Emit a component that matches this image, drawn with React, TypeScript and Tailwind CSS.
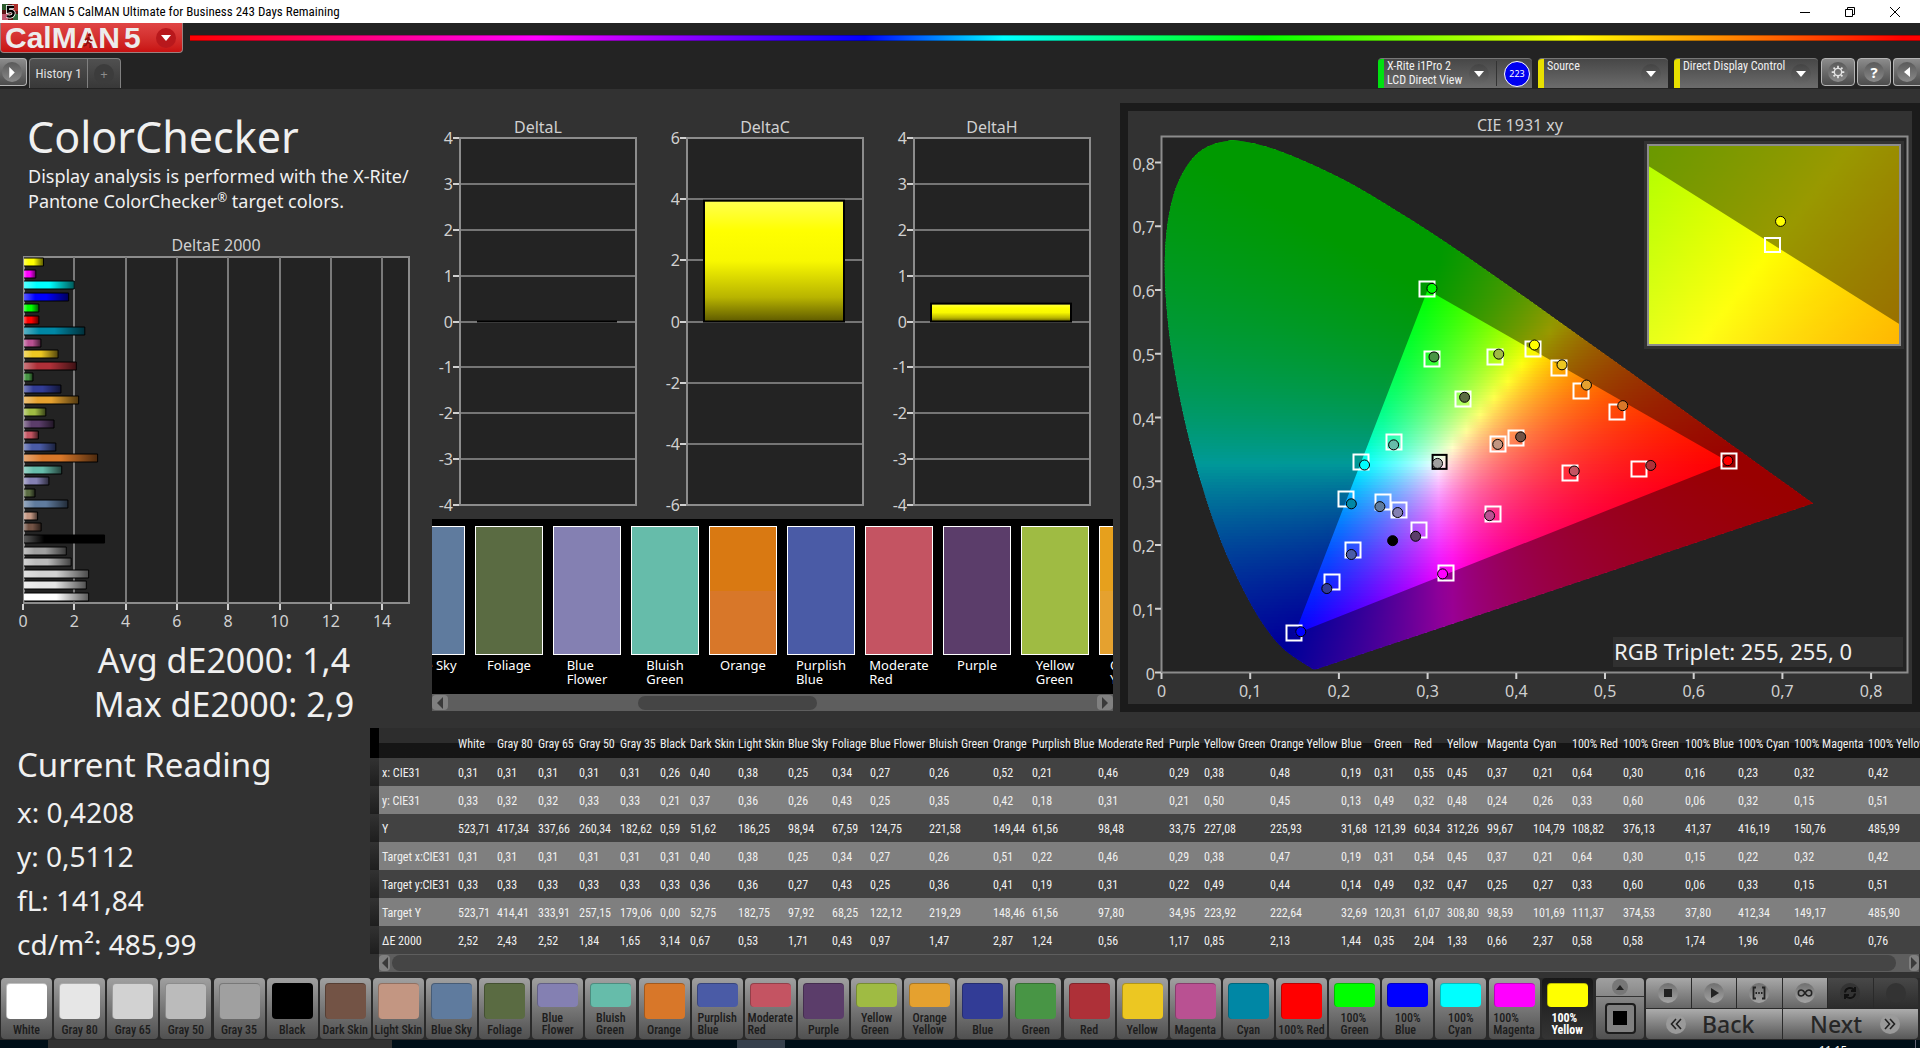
import type { ReactNode } from "react";

type Patch = {
  name: string;
  color: string;
  width: number;
  values: string[];
};

const rowLabels = ["x: CIE31", "y: CIE31", "Y", "Target x:CIE31", "Target y:CIE31", "Target Y", "ΔE 2000"];

const patches: Patch[] = [
  { name: "White", color: "#ffffff", width: 39, values: ["0,31", "0,33", "523,71", "0,31", "0,33", "523,71", "2,52"] },
  { name: "Gray 80", color: "#e6e6e6", width: 41, values: ["0,31", "0,32", "417,34", "0,31", "0,33", "414,41", "2,43"] },
  { name: "Gray 65", color: "#d2d2d2", width: 41, values: ["0,31", "0,32", "337,66", "0,31", "0,33", "333,91", "2,52"] },
  { name: "Gray 50", color: "#bbbbbb", width: 41, values: ["0,31", "0,33", "260,34", "0,31", "0,33", "257,15", "1,84"] },
  { name: "Gray 35", color: "#a0a0a0", width: 40, values: ["0,31", "0,33", "182,62", "0,31", "0,33", "179,06", "1,65"] },
  { name: "Black", color: "#000000", width: 30, values: ["0,26", "0,21", "0,59", "0,31", "0,33", "0,00", "3,14"] },
  { name: "Dark Skin", color: "#735345", width: 48, values: ["0,40", "0,37", "51,62", "0,40", "0,36", "52,75", "0,67"] },
  { name: "Light Skin", color: "#c39682", width: 50, values: ["0,38", "0,36", "186,25", "0,38", "0,36", "182,75", "0,53"] },
  { name: "Blue Sky", color: "#5f7b9e", width: 44, values: ["0,25", "0,26", "98,94", "0,25", "0,27", "97,92", "1,71"] },
  { name: "Foliage", color: "#5a6b42", width: 38, values: ["0,34", "0,43", "67,59", "0,34", "0,43", "68,25", "0,43"] },
  { name: "Blue Flower", color: "#8480b2", width: 59, values: ["0,27", "0,25", "124,75", "0,27", "0,25", "122,12", "0,97"] },
  { name: "Bluish Green", color: "#66bcaa", width: 64, values: ["0,26", "0,35", "221,58", "0,26", "0,36", "219,29", "1,47"] },
  { name: "Orange", color: "#d87729", width: 39, values: ["0,52", "0,42", "149,44", "0,51", "0,41", "148,46", "2,87"] },
  { name: "Purplish Blue", color: "#4a5ba6", width: 66, values: ["0,21", "0,18", "61,56", "0,22", "0,19", "61,56", "1,24"] },
  { name: "Moderate Red", color: "#c45462", width: 71, values: ["0,46", "0,31", "98,48", "0,46", "0,31", "97,80", "0,56"] },
  { name: "Purple", color: "#5b3d6a", width: 35, values: ["0,29", "0,21", "33,75", "0,29", "0,22", "34,95", "1,17"] },
  { name: "Yellow Green", color: "#9fbb43", width: 66, values: ["0,38", "0,50", "227,08", "0,38", "0,49", "223,92", "0,85"] },
  { name: "Orange Yellow", color: "#e5a12f", width: 71, values: ["0,48", "0,45", "225,93", "0,47", "0,44", "222,64", "2,13"] },
  { name: "Blue", color: "#323c96", width: 33, values: ["0,19", "0,13", "31,68", "0,19", "0,14", "32,69", "1,44"] },
  { name: "Green", color: "#489545", width: 40, values: ["0,31", "0,49", "121,39", "0,31", "0,49", "120,31", "0,35"] },
  { name: "Red", color: "#ae3038", width: 33, values: ["0,55", "0,32", "60,34", "0,54", "0,32", "61,07", "2,04"] },
  { name: "Yellow", color: "#ecc722", width: 40, values: ["0,45", "0,48", "312,26", "0,45", "0,47", "308,80", "1,33"] },
  { name: "Magenta", color: "#b95192", width: 46, values: ["0,37", "0,24", "99,67", "0,37", "0,25", "98,59", "0,66"] },
  { name: "Cyan", color: "#0087a5", width: 39, values: ["0,21", "0,26", "104,79", "0,21", "0,27", "101,69", "2,37"] },
  { name: "100% Red", color: "#ff0000", width: 51, values: ["0,64", "0,33", "108,82", "0,64", "0,33", "111,37", "0,58"] },
  { name: "100% Green", color: "#00ff00", width: 62, values: ["0,30", "0,60", "376,13", "0,30", "0,60", "374,53", "0,58"] },
  { name: "100% Blue", color: "#0000ff", width: 53, values: ["0,16", "0,06", "41,37", "0,15", "0,06", "37,80", "1,74"] },
  { name: "100% Cyan", color: "#00ffff", width: 56, values: ["0,23", "0,32", "416,19", "0,22", "0,33", "412,34", "1,96"] },
  { name: "100% Magenta", color: "#ff00ff", width: 74, values: ["0,32", "0,15", "150,76", "0,32", "0,15", "149,17", "0,46"] },
  { name: "100% Yellow", color: "#ffff00", width: 66, values: ["0,42", "0,51", "485,99", "0,42", "0,51", "485,90", "0,76"] },
];

// chromaticity of each target box: x, y
const targets: [number, number][] = [
  [0.299, 0.602], [0.305, 0.4925], [0.3756, 0.4944], [0.4193, 0.5075], [0.4481, 0.477],
  [0.4734, 0.441], [0.5131, 0.4087], [0.6396, 0.3323], [0.5378, 0.3186], [0.4607, 0.313],
  [0.3998, 0.3671], [0.3791, 0.3578], [0.3399, 0.4298], [0.2623, 0.3621], [0.2249, 0.3304],
  [0.2076, 0.272], [0.2496, 0.2677], [0.2675, 0.2553], [0.2905, 0.223], [0.2163, 0.1925],
  [0.1921, 0.1416], [0.149, 0.0621], [0.3204, 0.1553], [0.3733, 0.2484],
];

// measured readings: x, y, fill
const readings: [number, number, string][] = [
  [0.3049, 0.6025, "#00ff00"], [0.3072, 0.495, "#489545"], [0.3802, 0.4994, "#9fbb43"],
  [0.4205, 0.5137, "#ffff00"], [0.4515, 0.4826, "#ecc722"], [0.4791, 0.4509, "#e5a12f"],
  [0.52, 0.4186, "#d87729"], [0.6385, 0.3323, "#ff0000"], [0.5516, 0.3248, "#ae3038"],
  [0.4653, 0.3161, "#c45462"], [0.4049, 0.3696, "#735345"], [0.3791, 0.3578, "#c39682"],
  [0.3417, 0.4317, "#5a6b42"], [0.2617, 0.3571, "#66bcaa"], [0.2289, 0.3255, "#00ffff"],
  [0.214, 0.2646, "#0087a5"], [0.2462, 0.2602, "#5f7b9e"], [0.2663, 0.2509, "#8480b2"],
  [0.2865, 0.2137, "#5b3d6a"], [0.2606, 0.2068, "#000000"], [0.214, 0.1851, "#4a5ba6"],
  [0.1864, 0.1317, "#323c96"], [0.157, 0.064, "#0000ff"], [0.3169, 0.1547, "#ff00ff"],
  [0.3699, 0.246, "#b95192"], [0.3112, 0.328, "#a0a0a0"],
];

const locus: [number, number][] = [
  [0.1741, 0.005], [0.1714, 0.0051], [0.1689, 0.0069], [0.1644, 0.0109], [0.1566, 0.0177],
  [0.144, 0.0297], [0.1355, 0.0399], [0.1241, 0.0578], [0.1096, 0.0868], [0.0913, 0.1327],
  [0.0687, 0.2007], [0.0454, 0.295], [0.0235, 0.4127], [0.0082, 0.5384], [0.0039, 0.6548],
  [0.0139, 0.7502], [0.0389, 0.812], [0.0743, 0.8338], [0.1142, 0.8262], [0.1547, 0.8059],
  [0.1929, 0.7816], [0.2296, 0.7543], [0.3016, 0.6923], [0.3731, 0.6245], [0.4441, 0.5547],
  [0.5125, 0.4866], [0.5752, 0.4242], [0.627, 0.3725], [0.6915, 0.3083], [0.7347, 0.2653],
];

const gamut: [number, number][] = [[0.64, 0.33], [0.3, 0.6], [0.15, 0.06]];

// "Blue Flower" takes two lines on a narrow button, "Gray 80" does not
const oneLine = /^(Gray \d+|Dark Skin|Light Skin|Blue Sky|100% Red)$/;

function labelLines(name: string) {
  return oneLine.test(name) ? [name] : name.split(" ");
}

function chromaColor(x: number, y: number) {
  const X = x / y;
  const Z = (1 - x - y) / y;
  const rgb = [
    3.2406 * X - 1.5372 - 0.4986 * Z,
    -0.9689 * X + 1.8758 + 0.0415 * Z,
    0.0557 * X - 0.204 + 1.057 * Z,
  ].map((c) => Math.max(0, c));
  const max = Math.max(...rgb);
  return `rgb(${rgb.map((c) => Math.round((c / max) * 255)).join(",")})`;
}

type FieldProps = {
  id: string;
  x0: number;
  x1: number;
  y0: number;
  y1: number;
  left: number;
  top: number;
  width: number;
  height: number;
};

// Thin horizontal bands, each one a gradient sampled along x
function ColorField({ id, x0, x1, y0, y1, left, top, width, height }: FieldProps) {
  const band = 3;
  const rows = Math.ceil(height / band);
  const stops = 48;
  return (
    <g>
      {Array.from({ length: rows }, (_, r) => {
        const y = y1 - ((y1 - y0) * (r + 0.5)) / rows;
        return (
          <g key={r}>
            <linearGradient id={`${id}${r}`}>
              {Array.from({ length: stops + 1 }, (_, s) => (
                <stop
                  key={s}
                  offset={s / stops}
                  stopColor={chromaColor(x0 + ((x1 - x0) * s) / stops, Math.max(y, 0.002))}
                />
              ))}
            </linearGradient>
            <rect x={left} y={top + r * band} width={width} height={band + 1} fill={`url(#${id}${r})`} />
          </g>
        );
      })}
    </g>
  );
}

const px = (x: number) => 41.5 + x * 887;
const py = (y: number) => 569.5 - y * 637.5;

function locusPath() {
  const p = locus.map(([x, y]) => [px(x), py(y)]);
  let d = `M${p[0][0]} ${p[0][1]}`;
  for (let i = 0; i < p.length - 1; i++) {
    const a = p[Math.max(i - 1, 0)];
    const b = p[i];
    const c = p[i + 1];
    const e = p[Math.min(i + 2, p.length - 1)];
    d += `C${b[0] + (c[0] - a[0]) / 6} ${b[1] + (c[1] - a[1]) / 6} ${c[0] - (e[0] - b[0]) / 6} ${c[1] - (e[1] - b[1]) / 6} ${c[0]} ${c[1]}`;
  }
  return d + "Z";
}

function CieChart() {
  const shape = locusPath();
  const triangle = "M" + gamut.map(([x, y]) => `${px(x)} ${py(y)}`).join("L") + "Z";

  // zoomed view, centred on the yellow target
  const box = { x: 528, y: 42, w: 252, h: 200 };
  const centre = [0.4193, 0.5053];
  const range = 0.05;
  const zx = (x: number) => box.x + box.w * ((x - centre[0]) / range + 0.5);
  const zy = (y: number) => box.y + box.h * (0.5 - (y - centre[1]) / range);
  const zoomTriangle = "M" + gamut.map(([x, y]) => `${zx(x)} ${zy(y)}`).join("L") + "Z";

  return (
    <svg viewBox="8 8 784 593" className="block w-full" role="img" aria-label="CIE 1931 xy">
      <defs>
        <clipPath id="locus">
          <path d={shape} />
        </clipPath>
        <clipPath id="zoomBox">
          <rect x={box.x} y={box.y} width={box.w} height={box.h} />
        </clipPath>
      </defs>
      <text x="400" y="28" textAnchor="middle" fontSize="16" fill="#d0d0d0">CIE 1931 xy</text>
      <rect x="41.5" y="33.5" width="746" height="536" fill="#232323" stroke="#8c8c8c" strokeWidth="2" />
      {[0, 1, 2, 3, 4, 5, 6, 7, 8].map((n) => (
        <g key={n} fontSize="16" fill="#d0d0d0" stroke="none">
          <path d={`M${px(n / 10)} 570v6M35 ${py(n / 10)}h6`} stroke="#d0d0d0" strokeWidth="2" />
          <text x={px(n / 10)} y="594" textAnchor="middle">{n ? `0,${n}` : "0"}</text>
          <text x="35" y={py(n / 10) + 7} textAnchor="end">{n ? `0,${n}` : "0"}</text>
        </g>
      ))}
      <g clipPath="url(#locus)">
        <ColorField id="f" x0={0} x1={0.75} y0={0} y1={0.84} left={41.5} top={34} width={665.25} height={535.5} />
        <path d={`M0 0H792V601H0Z${triangle}`} fillRule="evenodd" fill="#000" fillOpacity="0.4" />
      </g>
      {targets.map(([x, y], i) => (
        <rect key={i} x={Math.round(px(x)) - 7.5} y={Math.round(py(y)) - 7.5} width="15" height="15" fill="none" stroke="#fff" strokeWidth="2" />
      ))}
      <rect x={px(0.3135) - 7} y={py(0.3304) - 7} width="14" height="14" fill="none" stroke="#000" strokeWidth="2" />
      {readings.map(([x, y, fill], i) => (
        <circle key={i} cx={px(x)} cy={py(y)} r="5" fill={fill} stroke="#000" strokeWidth="1" />
      ))}

      <rect x="524" y="38" width="260" height="208" fill="#323232" />
      <g clipPath="url(#zoomBox)">
        <ColorField
          id="z"
          x0={centre[0] - range / 2}
          x1={centre[0] + range / 2}
          y0={centre[1] - range / 2}
          y1={centre[1] + range / 2}
          left={box.x}
          top={box.y}
          width={box.w}
          height={box.h}
        />
        <path d={`M-9000 -9000H9000V9000H-9000Z${zoomTriangle}`} fillRule="evenodd" fill="#000" fillOpacity="0.4" />
      </g>
      <rect x={box.x} y={box.y} width={box.w} height={box.h} fill="none" stroke="#8c8c8c" strokeWidth="2" />
      <rect x={zx(centre[0]) - 9} y={zy(centre[1]) - 7} width="15" height="14" fill="none" stroke="#fff" strokeWidth="2" />
      <circle cx={zx(0.4208) - 1} cy={zy(0.5112)} r="5" fill="#ff0" stroke="#000" />

      <rect x="493" y="534" width="290" height="30" fill="#303030" />
      <text x="494" y="557" fontSize="22" fill="#f0f0f0">RGB Triplet: 255, 255, 0</text>
    </svg>
  );
}

function DeltaEChart() {
  const bars = [...patches].reverse();
  const unit = 25.65;
  return (
    <svg viewBox="0 0 424 408" className="block w-[424px]" role="img" aria-label="DeltaE 2000">
      <defs>
        <linearGradient id="shade">
          <stop offset="0" stopColor="#fff" stopOpacity="0.35" />
          <stop offset="0.25" stopColor="#fff" stopOpacity="0" />
          <stop offset="0.5" stopColor="#000" stopOpacity="0" />
          <stop offset="1" stopColor="#000" stopOpacity="0.65" />
        </linearGradient>
      </defs>
      <text x="216" y="21" textAnchor="middle" fontSize="16" fill="#d0d0d0">DeltaE 2000</text>
      <rect x="24" y="27" width="385" height="346" fill="#232323" stroke="#8c8c8c" strokeWidth="2" />
      {[0, 2, 4, 6, 8, 10, 12, 14].map((n) => (
        <g key={n}>
          {n > 0 && <path d={`M${23 + Math.round(n * unit)} 27v346`} stroke="#7a7a7a" strokeWidth="2" />}
          <path d={`M${23 + Math.round(n * unit)} 374v6`} stroke="#d0d0d0" strokeWidth="2" />
          <text x={23 + n * unit} y="397" textAnchor="middle" fontSize="16" fill="#d0d0d0">{n}</text>
        </g>
      ))}
      {bars.map((p, i) => {
        const w = parseFloat(p.values[6].replace(",", ".")) * unit;
        const y = 28 + Math.round(i * 11.54);
        return (
          <g key={p.name}>
            <rect x="24" y={y} width={w} height="8" fill={p.color} />
            <rect x="24" y={y} width={w} height="8" fill="url(#shade)" />
            <path d={`M24 ${y}h${w}v8h${-w}`} fill="none" stroke="#000" />
          </g>
        );
      })}
    </svg>
  );
}

function DeltaChart({ title, max, step, value }: { title: string; max: number; step: number; value: number }) {
  const ticks: number[] = [];
  for (let n = max; n >= -max; n -= step) ticks.push(n);
  const y = (n: number) => 33 + ((max - n) / (2 * max)) * 367;
  const id = `bar${title}`;
  return (
    <svg viewBox="0 0 227 414" className="block w-[227px]" role="img" aria-label={title}>
      <defs>
        <linearGradient id={id} x1="0" y1="0" x2="0" y2="1">
          <stop offset="0" stopColor="#ffff50" />
          <stop offset="0.25" stopColor="#ffff00" />
          <stop offset="0.5" stopColor="#f8f800" />
          <stop offset="0.8" stopColor="#b8b400" />
          <stop offset="1" stopColor="#5e5a00" />
        </linearGradient>
      </defs>
      <text x="114" y="28" textAnchor="middle" fontSize="16" fill="#d0d0d0">{title}</text>
      <rect x="36" y="33" width="176" height="367" fill="#232323" />
      {ticks.map((n) => (
        <g key={n}>
          <path d={`M36 ${Math.round(y(n))}h176`} stroke="#757575" strokeWidth="2" />
          <path d={`M29 ${Math.round(y(n))}h6`} stroke="#d0d0d0" strokeWidth="2" />
          <text x="29" y={y(n) + 6} textAnchor="end" fontSize="16" fill="#d0d0d0">{n}</text>
        </g>
      ))}
      <rect x="36" y="33" width="176" height="367" fill="none" stroke="#8c8c8c" strokeWidth="2" />
      {value > 0.1 ? (
        <rect x="53" y={y(value)} width="140" height={y(0) - y(value)} fill={`url(#${id})`} stroke="#000" strokeWidth="2" />
      ) : (
        <path d={`M53 ${y(0)}h140`} stroke="#000" strokeWidth="2" />
      )}
    </svg>
  );
}

function Arrow({ dir }: { dir: "left" | "right" }) {
  return (
    <svg viewBox="0 0 6 12" className="h-3 w-1.5">
      <path d={dir === "left" ? "M6 0v12L0 6z" : "M0 0v12l6-6z"} fill="#3a3a3a" />
    </svg>
  );
}

function SwatchStrip() {
  const shown = patches.slice(8, 18);
  const measured: Record<string, string> = { Orange: "#d97912", "Orange Yellow": "#e6a01d" };
  return (
    <div className="mr-[7px] ml-2 bg-black">
      <div className="flex h-[175px] overflow-hidden pt-[7px]">
        <ul className="-ml-10 flex">
          {shown.map((p) => (
            <li key={p.name} className="flex w-[78px] shrink-0 flex-col items-center">
              <div className="flex h-[129px] w-[68px] flex-col border border-white" style={{ background: p.color }}>
                <div className="h-1/2" style={{ background: measured[p.name] ?? p.color }} />
              </div>
              <div className="mt-[3px] text-[13px] leading-[14px] text-white">
                {p.name === "Blue Sky" ? p.name : labelLines(p.name).map((l) => <div key={l}>{l}</div>)}
              </div>
            </li>
          ))}
        </ul>
      </div>
      <div className="flex h-[17px] items-center bg-[#5e5e5e]">
        <button aria-label="Scroll left" className="flex h-[15px] w-4 items-center justify-center rounded bg-[#808080]">
          <Arrow dir="left" />
        </button>
        <div className="flex-1 px-1">
          <div className="ml-[29%] h-[14px] w-[28%] rounded-full bg-[#454545]" />
        </div>
        <button aria-label="Scroll right" className="flex h-[15px] w-4 items-center justify-center rounded bg-[#808080]">
          <Arrow dir="right" />
        </button>
      </div>
    </div>
  );
}

function DataTable() {
  return (
    <div className="min-w-0 overflow-hidden">
      <table className="w-[1561px] table-fixed border-collapse text-left font-['Roboto_Condensed',Roboto,sans-serif] text-[12px] whitespace-nowrap text-[#f0f0f0]">
        <colgroup>
          <col className="w-[9px]" />
          <col className="w-[76px]" />
          {patches.map((p) => (
            <col key={p.name} style={{ width: p.width }} />
          ))}
        </colgroup>
        <thead>
          <tr className="h-[30px] bg-linear-to-b from-[#2d2d2d] from-50% to-[#151515] to-50%">
            <td className="bg-black" />
            <td />
            {patches.map((p) => (
              <th key={p.name} scope="col" className="pt-0.5 pl-[3px] font-normal">{p.name}</th>
            ))}
          </tr>
        </thead>
        <tbody>
          {rowLabels.map((label, r) => (
            <tr key={label} className="h-7 bg-[#424242] even:bg-[#7f7f7f]">
              <td className="bg-linear-to-b from-[#323232] to-[#1e1e1e]" />
              <th scope="row" className="pt-0.5 pl-[3px] font-normal">{label}</th>
              {patches.map((p) => (
                <td key={p.name} className="pt-0.5 pl-[3px]">{p.values[r]}</td>
              ))}
            </tr>
          ))}
        </tbody>
      </table>
      <div className="mr-[1px] ml-[9px] flex h-[18px] items-center bg-[#5e5e5e]">
        <button aria-label="Scroll table left" className="flex h-4 w-[11px] items-center justify-center rounded bg-[#808080]">
          <Arrow dir="left" />
        </button>
        <div className="mr-[13px] ml-0.5 h-4 flex-1 rounded-full bg-[#454545]" />
        <button aria-label="Scroll table right" className="flex h-4 w-[10px] items-center justify-center rounded bg-[#808080]">
          <Arrow dir="right" />
        </button>
      </div>
    </div>
  );
}

function TitleBar() {
  return (
    <div className="flex h-[23px] items-center bg-white text-black">
      <svg viewBox="0 0 16 16" className="ml-0.5 h-4 w-4">
        <rect width="16" height="16" fill="#5c1414" />
        <path d="M0 0h6v6H0z" fill="#2c5a2c" />
        <path d="M10 0h6v7h-6z" fill="#b0302c" />
        <path d="M0 10h6v6H0z" fill="#c05870" />
        <path d="M11 10h5v6h-5z" fill="#2e6a3c" />
        <path d="M12 3H6v4.500c5-1.500 6.500 1 5 3.500-1 1.700-4 2-6 1" fill="none" stroke="#fff" strokeWidth="4" />
        <path d="M12 3H6v4.500c5-1.500 6.500 1 5 3.500-1 1.700-4 2-6 1" fill="none" stroke="#000" strokeWidth="2.400" />
      </svg>
      <h1 className="ml-[5px] flex-1 font-['Roboto_Condensed',Roboto,sans-serif] text-[13px] leading-4">
        CalMAN 5 CalMAN Ultimate for Business 243 Days Remaining
      </h1>
      <button aria-label="Minimize" className="flex w-[45px] justify-center">
        <svg viewBox="0 0 10 10" className="h-[10px] w-[10px]"><path d="M0 5.500h10" stroke="#000" /></svg>
      </button>
      <button aria-label="Restore" className="flex w-[45px] justify-center">
        <svg viewBox="0 0 10 10" className="h-[10px] w-[10px]"><path d="M.5 2.500h7v7h-7zM2.500 2.500v-2h7v7h-2" fill="none" stroke="#000" /></svg>
      </button>
      <button aria-label="Close" className="mr-0.5 flex w-[46px] justify-center">
        <svg viewBox="0 0 10 10" className="h-[10px] w-[10px]"><path d="M0 0l10 10M10 0L0 10" stroke="#000" /></svg>
      </button>
    </div>
  );
}

function Chevron() {
  return (
    <span className="flex h-5 w-5 shrink-0 items-center justify-center rounded-full bg-linear-to-b from-[#444] to-[#666]">
      <svg viewBox="0 0 10 6" className="h-[6px] w-[10px]"><path d="M0 0h10L5 6z" fill="#fff" /></svg>
    </span>
  );
}

function Device({ lines, className, bar, children }: { lines: string[]; className: string; bar: string; children?: ReactNode }) {
  return (
    <div className={`flex h-[30px] overflow-hidden rounded-t border-t border-[#777] bg-linear-to-b from-[#474747] to-[#6c6c6c] ${className}`}>
      <button className="flex flex-1 text-left">
        <span className={`h-full w-1.5 shrink-0 ${bar}`} />
        <span className="ml-[3px] flex-1 font-['Roboto_Condensed',Roboto,sans-serif] text-[12px] leading-[14px] whitespace-nowrap text-[#f0f0f0]">
          {lines.map((l) => (
            <span key={l} className="block">{l}</span>
          ))}
        </span>
        <span className="mt-[5px] mr-[7px]"><Chevron /></span>
      </button>
      {children}
    </div>
  );
}

function ToolButton({ label, className, children }: { label: string; className: string; children: ReactNode }) {
  return (
    <button aria-label={label} className={`flex h-7 items-center justify-center border border-[#b5b5b5] bg-linear-to-b from-[#8c8c8c] to-[#4c4c4c] ${className}`}>
      <span className="flex h-5 w-5 shrink-0 items-center justify-center rounded-full bg-linear-to-b from-[#5a5a5a] to-[#8a8a8a]">{children}</span>
    </button>
  );
}

function Header() {
  return (
    <header className="h-[66px] bg-[#232323]">
      <div className="flex h-[35px] items-start">
        <button aria-label="CalMAN 5 menu" className="flex h-[30px] w-[183px] items-center rounded-b border border-t-0 border-[#9c8080] bg-linear-to-b from-[#e04545] to-[#c81010] pl-1">
          <span className="flex-1 text-left font-['Liberation_Sans',Arial,sans-serif] text-[30px] leading-[26px] font-bold text-[#ececec]">
            CalM
            <span className="relative">
              A
              <svg viewBox="0 0 10 16" className="absolute top-3 left-1.5 h-[16px] w-[10px]">
                <circle cx="6.500" cy="2" r="1.700" fill="#901010" />
                <path d="M6 4L4.500 9l3 2-.5 4M4.500 9L3 12 .5 13M2 7l3-2 2.500 2.500H9.500" fill="none" stroke="#901010" strokeWidth="1.600" />
              </svg>
            </span>
            N<span className="ml-1">5</span>
          </span>
          <span className="mr-[6px] flex h-5 w-5 items-center justify-center rounded-full bg-[#b8181c]">
            <svg viewBox="0 0 10 6" className="h-[6px] w-[10px]"><path d="M0 0h10L5 6z" fill="#fff" /></svg>
          </span>
        </button>
        <div className="mt-3 ml-[7px] h-[6px] flex-1 border-y border-black/30 bg-[linear-gradient(90deg,#f00_0%,#f0f_20%,#00f_39%,#0ff_47%,#0f0_62%,#ff0_80%,#f00_99%)]" />
      </div>
      <div className="flex items-start">
        <ToolButton label="Expand" className="w-[27px] rounded-r border-l-0 pr-0.5">
          <svg viewBox="0 0 6 12" className="h-[11px] w-[6px]"><path d="M0 0v12l6-6z" fill="#fff" /></svg>
        </ToolButton>
        <div className="ml-0.5 flex h-[30px] rounded-t border border-b-0 border-[#808080] bg-linear-to-b from-[#505050] to-[#383838]">
          <button className="w-[57px] text-center font-['Roboto_Condensed',Roboto,sans-serif] text-[13px] text-[#e0e0e0]">History 1</button>
          <button aria-label="Add history" className="flex w-[33px] items-center justify-center border-l border-[#808080]">
            <span className="flex h-5 w-5 items-center justify-center rounded-full bg-[#3c3c3c] text-[13px] leading-4 text-[#8c8c8c]">+</span>
          </button>
        </div>
        <div className="ml-auto flex items-start">
          <Device lines={["X-Rite i1Pro 2", "LCD Direct View"]} bar="bg-[#00e010]" className="w-[154px]">
            <span className="my-0.5 w-px bg-[#333]" />
            <span className="mr-0.5 ml-[7px] flex h-[26px] w-[26px] shrink-0 items-center justify-center self-center rounded-full border border-white bg-[#0000f0] text-[9px] text-white">
              223
            </span>
          </Device>
          <Device lines={["Source"]} bar="bg-[#e8e000]" className="ml-[6px] w-[130px]" />
          <Device lines={["Direct Display Control"]} bar="bg-[#e8e000]" className="ml-[6px] w-[144px]" />
          <ToolButton label="Settings" className="ml-[3px] w-[34px] rounded">
            <svg viewBox="0 0 16 16" className="h-[14px] w-[14px]">
              <circle cx="8" cy="8" r="4.200" fill="none" stroke="#e4e4e4" strokeWidth="1.600" />
              <path d="M8 .8v2.600M8 12.600v2.600M.8 8h2.600M12.600 8h2.600M2.900 2.900l1.800 1.800M11.300 11.300l1.800 1.800M2.900 13.100l1.800-1.800M11.300 4.700l1.800-1.800" stroke="#e4e4e4" strokeWidth="2" />
            </svg>
          </ToolButton>
          <ToolButton label="Help" className="ml-0.5 w-[34px] rounded">
            <span className="text-[15px] leading-4 font-bold text-white">?</span>
          </ToolButton>
          <ToolButton label="Collapse" className="ml-0.5 w-[27px] rounded-l border-r-0">
            <svg viewBox="0 0 6 10" className="h-[10px] w-[6px]"><path d="M6 0v10L0 5z" fill="#fff" /></svg>
          </ToolButton>
        </div>
      </div>
    </header>
  );
}

function PatchButton({ patch, active }: { patch: Patch; active: boolean }) {
  const lines = labelLines(patch.name);
  return (
    <button
      className={`flex h-[61px] w-[51px] flex-col items-center rounded pt-[5px] ${
        active ? "bg-linear-to-b from-[#181818] to-[#343434] font-bold text-white" : "bg-linear-to-b from-[#a0a0a0] to-[#505050] font-medium text-[#1c1c1c]"
      }`}
    >
      <span
        className={`w-[41px] shrink-0 rounded border-t border-l border-black/25 ${lines.length > 1 ? "h-6" : "h-9"}`}
        style={{ backgroundColor: patch.color }}
      />
      <span className="mt-auto mb-[3px] text-left font-['Roboto_Condensed',Roboto,sans-serif] text-[12px] leading-3 whitespace-nowrap">
        {lines.map((l) => (
          <span key={l} className="block">{l}</span>
        ))}
      </span>
    </button>
  );
}

const transport: { label: string; off?: boolean; icon: ReactNode }[] = [
  { label: "Stop", icon: <path d="M4 4h8v8H4z" fill="#222" /> },
  { label: "Play", icon: <path d="M5 3v10l8-5z" fill="#222" /> },
  { label: "Read series", icon: <path d="M5 2.500H2.500v11H5M11 2.500h2.500v11H11M4.500 8h1.500M7.250 8h1.500M10 8h1.500" fill="none" stroke="#222" strokeWidth="1.800" /> },
  { label: "Continuous", icon: <path d="M8 8C6.500 5.500 5.500 5 4.300 5a3 3 0 0 0 0 6C5.500 11 6.500 10.500 8 8s2.500-3 3.700-3a3 3 0 0 1 0 6C10.500 11 9.500 10.500 8 8z" fill="none" stroke="#222" strokeWidth="1.500" /> },
  { label: "Repeat", off: true, icon: <path d="M3 7.500A5 5 0 0 1 12 5M13 2v4H9M13 8.500A5 5 0 0 1 4 11M3 14v-4h4" fill="none" stroke="#111" strokeWidth="2" /> },
  { label: "Record", off: true, icon: null },
];

function Footer() {
  return (
    <footer className="bg-[#2a2a2a]">
      <div className="flex h-[62px]">
        <div className="flex flex-1 justify-between overflow-hidden pr-[3px] pl-px">
          {patches.map((p) => (
            <PatchButton key={p.name} patch={p} active={p.name === "100% Yellow"} />
          ))}
        </div>
        <div className="flex h-[61px] w-12 flex-col overflow-hidden rounded bg-linear-to-b from-[#a0a0a0] to-[#505050]">
          <button aria-label="Previous patches" className="flex h-[19px] items-center justify-center border-b border-[#333]">
            <span className="flex h-4 w-4 items-center justify-center rounded-full bg-[#777]">
              <svg viewBox="0 0 8 5" className="h-[5px] w-2"><path d="M0 5h8L4 0z" fill="#222" /></svg>
            </span>
          </button>
          <button aria-label="Pattern window" className="flex flex-1 items-center justify-center">
            <span className="flex h-[31px] w-[31px] items-center justify-center rounded border-2 border-[#1c1c1c] bg-[#808080]">
              <span className="h-[14px] w-[14px] bg-black" />
            </span>
          </button>
        </div>
        <div className="mr-0.5 ml-0.5 flex h-[61px] w-[272px] flex-col gap-px overflow-hidden rounded">
          <div className="grid h-[30px] grid-cols-6 gap-px">
            {transport.map((t) => (
              <button
                key={t.label}
                aria-label={t.label}
                disabled={t.off}
                className={`flex items-center justify-center ${t.off ? "bg-linear-to-b from-[#484848] to-[#2c2c2c]" : "bg-linear-to-b from-[#a8a8a8] to-[#666]"}`}
              >
                <span className={`flex h-5 w-5 items-center justify-center rounded-full ${t.off ? "bg-[#333]" : "bg-linear-to-b from-[#707070] to-[#a4a4a4]"}`}>
                  <svg viewBox="0 0 16 16" className="h-4 w-4">{t.icon}</svg>
                </span>
              </button>
            ))}
          </div>
          <div className="grid flex-1 grid-cols-2 gap-px text-[23px] leading-[28px] font-medium text-[#262626]">
            <button className="flex items-center bg-linear-to-b from-[#acacac] to-[#585858] pl-5">
              <span className="mr-4 flex h-5 w-5 items-center justify-center rounded-full bg-[#9a9a9a]">
                <svg viewBox="0 0 12 12" className="h-3 w-3"><path d="M6 1L1.500 6 6 11M11 1L6.500 6l4.500 5" fill="none" stroke="#222" strokeWidth="1.600" /></svg>
              </span>
              Back
            </button>
            <button className="flex items-center justify-end bg-linear-to-b from-[#acacac] to-[#585858] pr-[18px]">
              Next
              <span className="ml-[18px] flex h-5 w-5 items-center justify-center rounded-full bg-[#9a9a9a]">
                <svg viewBox="0 0 12 12" className="h-3 w-3"><path d="M1 1l4.500 5L1 11M6 1l4.500 5L6 11" fill="none" stroke="#222" strokeWidth="1.600" /></svg>
              </span>
            </button>
          </div>
        </div>
      </div>
      <div className="flex h-2 overflow-hidden bg-[#000f18]">
        <div className="ml-12 w-[344px] bg-[#323232]" />
        <div className="ml-[345px] w-12 bg-[#36404c]" />
        <div className="mr-1 ml-auto flex border-r border-[#667] pr-[68px] pt-[3px] text-[11px] leading-[14px] text-white">11:15</div>
      </div>
    </footer>
  );
}

export default function App() {
  return (
    <div className="flex min-h-screen flex-col overflow-hidden bg-[#323232] font-['Noto_Sans',sans-serif]">
      <TitleBar />
      <Header />
      <main className="grid flex-1 grid-cols-[370px_54px_696px_minmax(0,1fr)] grid-rows-[639px_1fr] text-[#f0f0f0]">
        <section className="col-span-2">
          <h2 className="mt-[22px] ml-[27px] text-[43px] leading-[52px]">ColorChecker</h2>
          <p className="mt-px ml-7 text-[18px] leading-[25px]">
            Display analysis is performed with the X-Rite/
            <br />
            Pantone ColorChecker<sup className="text-[12px] leading-none">®</sup> target colors.
          </p>
          <div className="mt-4"><DeltaEChart /></div>
          <div className="ml-6 w-[400px] text-center text-[34px] leading-[44px]">
            <p>Avg dE2000: 1,4</p>
            <p>Max dE2000: 2,9</p>
          </div>
        </section>
        <section className="min-w-0">
          <div className="flex pt-4">
            <DeltaChart title="DeltaL" max={4} step={1} value={0.02} />
            <DeltaChart title="DeltaC" max={6} step={2} value={3.95} />
            <DeltaChart title="DeltaH" max={4} step={1} value={0.39} />
          </div>
          <SwatchStrip />
        </section>
        <section className="mt-[14px] self-start border-8 border-[#1b1b1b] bg-[#323232]">
          <CieChart />
        </section>
        <section className="pt-3 pl-[17px]">
          <h3 className="text-[33px] leading-[50px]">Current Reading</h3>
          <ul className="text-[28px] leading-[44px]">
            <li>x: 0,4208</li>
            <li>y: 0,5112</li>
            <li>fL: 141,84</li>
            <li>cd/m²: 485,99</li>
          </ul>
        </section>
        <section className="col-span-3 min-w-0">
          <DataTable />
        </section>
      </main>
      <Footer />
    </div>
  );
}
